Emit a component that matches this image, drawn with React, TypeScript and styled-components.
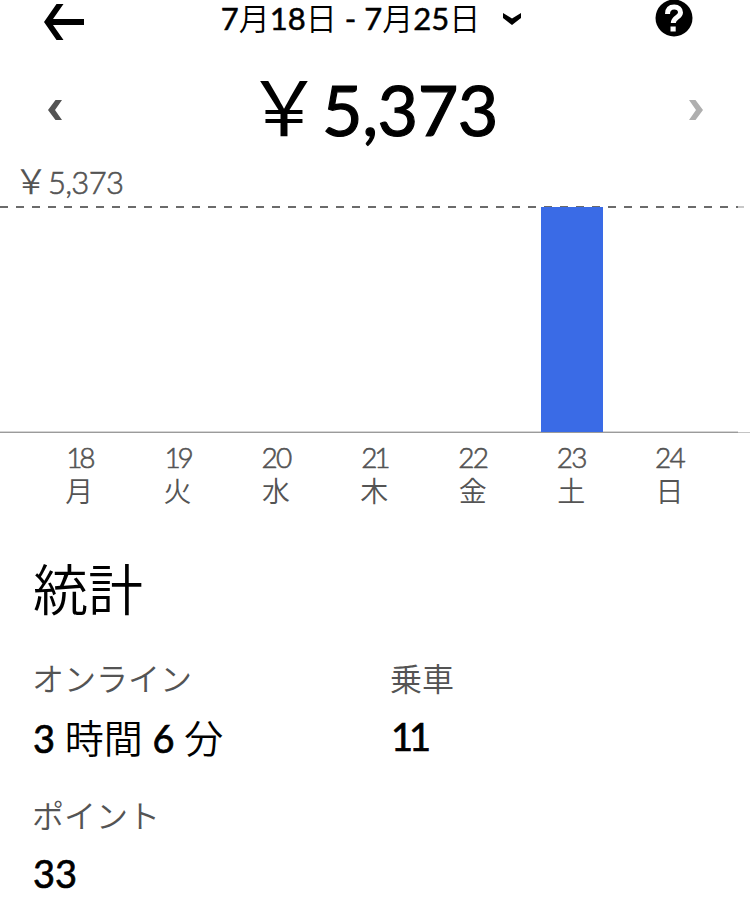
import React from "react";
import styled, { createGlobalStyle } from "styled-components";

const GlobalStyle = createGlobalStyle`
  * { box-sizing: border-box; }
  body {
    margin: 0;
    background: #fff;
    color: #000;
    font-family: Lato, "Noto Sans CJK JP", sans-serif;
    font-weight: 400;
  }
`;

const Screen = styled.main`
  width: 750px;
  height: 911px;
  overflow: hidden;
  display: flex;
  flex-direction: column;
  background: #fff;
  > * { flex: none; }
`;

const Header = styled.header`
  height: 64px;
  display: flex;
  align-items: flex-start;
  justify-content: space-between;
  padding: 0 57px 0 43px;
`;

const IconButton = styled.button<{ $top?: number }>`
  display: flex;
  border: 0;
  padding: 0;
  margin-top: ${(p) => p.$top ?? 0}px;
  background: none;
`;

const PeriodButton = styled.button`
  display: flex;
  align-items: flex-start;
  gap: 22px;
  border: 0;
  padding: 0;
  margin-left: 3px;
  background: none;
  color: #000;
  font: 400 31px/33px Lato, "Noto Sans CJK JP", sans-serif;
  svg { margin-top: 12px; }
`;

const Num = styled.span<{ $stroke?: number; $spacing?: number; $weight?: number }>`
  font-family: Lato, sans-serif;
  font-weight: ${(p) => p.$weight ?? 400};
  letter-spacing: ${(p) => p.$spacing ?? 0}px;
  -webkit-text-stroke: ${(p) => p.$stroke ?? 0}px currentColor;
`;

const Kanji = styled.span<{ $size?: number; $weight?: number }>`
  font-family: "Noto Sans CJK JP", sans-serif;
  font-weight: ${(p) => p.$weight ?? 350};
  font-size: ${(p) => (p.$size ? `${p.$size}px` : "inherit")};
`;

const TotalRow = styled.section`
  height: 98px;
  display: flex;
  align-items: flex-start;
  justify-content: space-between;
  padding: 0 47px 0 48px;
`;

const Total = styled.h1`
  margin: 0 7px 0 0;
  font-size: 70px;
  line-height: 78px;
  font-weight: 400;
  white-space: nowrap;
`;

const Peak = styled.div`
  height: 44px;
  padding-left: 14px;
  color: #545454;
  font-size: 31px;
  line-height: 35px;
`;

const Plot = styled.div`
  height: 227px;
  display: flex;
  align-items: flex-end;
  padding-left: 30.5px;
  background:
    linear-gradient(#9b9b9b, #9b9b9b) 0 226px / 738px 1px no-repeat,
    linear-gradient(#c4c4c4, #c4c4c4) 0 226px / 750px 1px no-repeat,
    linear-gradient(#d5d5d5, #d5d5d5) 0 225px / 738px 1px no-repeat,
    linear-gradient(90deg, transparent 738px, #ffffffa0 738px) 0 0 / 750px 2px no-repeat,
    repeating-linear-gradient(90deg, #6b6b6b 0 8px, #fff 8px 16px) 0 0 / 744px 2px no-repeat;
`;

const Column = styled.div`
  width: 98.4px;
  height: 227px;
  display: flex;
  align-items: flex-end;
  justify-content: center;
`;

const Bar = styled.div`
  width: 62px;
  margin-bottom: 1px;
  background: #3a6be6;
`;

const Days = styled.div`
  display: flex;
  height: 109px;
  padding: 7px 0 0 30px;
`;

const Day = styled.div`
  width: 98.4px;
  display: flex;
  flex-direction: column;
  align-items: center;
  color: #545454;
  font-size: 28px;
  line-height: 35px;
  ${Kanji} { line-height: 30px; }
`;

const Stats = styled.section`
  padding-left: 33px;
`;

const Heading = styled.h2`
  margin: 0;
  height: 112px;
  font: 350 55px/88px "Noto Sans CJK JP", sans-serif;
`;

const StatGrid = styled.dl`
  margin: 0;
  display: grid;
  grid-template-columns: 358px 1fr;
  grid-auto-rows: 137px;
`;

const StatLabel = styled.dt`
  margin-left: -1px;
  color: #545454;
  font: 350 32px/46px "Noto Sans CJK JP", sans-serif;
`;

const StatValue = styled.dd`
  margin: 0;
  font-size: 38px;
  line-height: 72px;
  white-space: pre;
`;

const days = [
  ["18", "月", 0],
  ["19", "火", 0],
  ["20", "水", 0],
  ["21", "木", 0],
  ["22", "金", 0],
  ["23", "土", 5373],
  ["24", "日", 0],
] as const;

const Stat = ({ label, children }: { label: string; children: React.ReactNode }) => (
  <div>
    <StatLabel>{label}</StatLabel>
    <StatValue>{children}</StatValue>
  </div>
);

export default function App() {
  return (
    <>
      <GlobalStyle />
      <Screen>
        <Header>
          <IconButton $top={4} aria-label="back">
            <svg width="42" height="36" viewBox="0 0 42 36">
              <path d="M13.500 0h7L10 15h31v6H10l10.500 15h-7L1 18z" />
            </svg>
          </IconButton>
          <PeriodButton>
            <span>
              <Num $stroke={0.5}>7</Num><Kanji>月</Kanji><Num $stroke={0.5}>18</Num><Kanji>日</Kanji>
              <Num $stroke={0.5}> - 7</Num><Kanji>月</Kanji><Num $stroke={0.5}>25</Num><Kanji>日</Kanji>
            </span>
            <svg width="20" height="13" viewBox="0 0 20 13">
              <path d="M1 1l9 5.500L19 1v5L10 13 1 6z" />
            </svg>
          </PeriodButton>
          <IconButton aria-label="help">
            <svg width="38" height="37" viewBox="0 0 38 37">
              <circle cx="19" cy="18" r="18.500" />
              <path d="M12.500 14c0-5 2.500-7 6.700-7 4 0 6.300 2.200 6.300 5.500 0 5-7.200 4.500-7.200 10.500" fill="none" stroke="#fff" strokeWidth="5" />
              <path d="M15.500 26.500h5.200v5h-5.200z" fill="#fff" />
            </svg>
          </IconButton>
        </Header>
        <TotalRow>
          <IconButton $top={36} aria-label="previous">
            <svg width="14" height="20" viewBox="0 0 14 20">
              <path d="M7.500 0H14L7 10l7 10H7.500L0 10z" fill="#545454" />
            </svg>
          </IconButton>
          <Total><Kanji $size={76} $weight={400}>{"\uFFE5"}</Kanji><Num $stroke={1.2} $spacing={-0.5}>5,373</Num></Total>
          <IconButton $top={36} aria-label="next">
            <svg width="14" height="20" viewBox="0 0 14 20">
              <path d="M6.500 0H0l7 10-7 10h6.500L14 10z" fill="#afafaf" />
            </svg>
          </IconButton>
        </TotalRow>
        <Peak><Kanji $size={34}>{"\uFFE5"}</Kanji><Num $weight={300} $stroke={0.6} $spacing={-0.7}>5,373</Num></Peak>
        <Plot>
          {days.map(([d, , v]) => (
            <Column key={d}>{v > 0 && <Bar style={{ height: (v / 5373) * 225 }} />}</Column>
          ))}
        </Plot>
        <Days>
          {days.map(([d, k]) => (
            <Day key={d}><Num $weight={300} $stroke={0.6} $spacing={d.includes("1") ? -3.2 : -1.8}>{d}</Num><Kanji>{k}</Kanji></Day>
          ))}
        </Days>
        <Stats>
          <Heading>統計</Heading>
          <StatGrid>
            <Stat label="オンライン">
              <Num $stroke={0.7}>3 </Num><Kanji $size={39}>時間</Kanji><Num $stroke={0.7}> 6 </Num><Kanji $size={39}>分</Kanji>
            </Stat>
            <Stat label="乗車"><Num $stroke={0.7} $spacing={-4}>11</Num></Stat>
            <Stat label="ポイント"><Num $stroke={0.7}>33</Num></Stat>
          </StatGrid>
        </Stats>
      </Screen>
    </>
  );
}
